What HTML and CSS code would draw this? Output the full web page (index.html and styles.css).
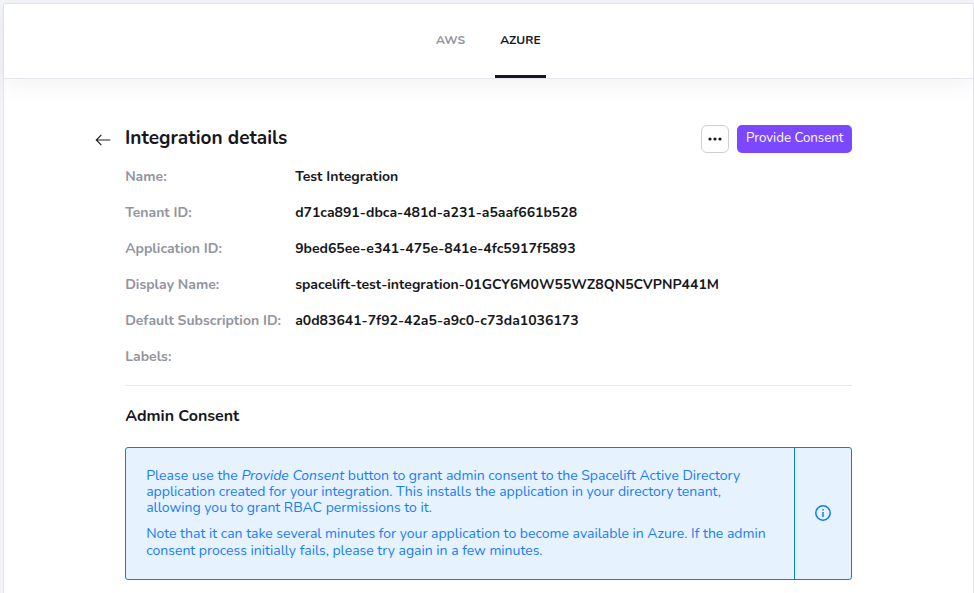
FILE: index.html
```html
<!DOCTYPE html>
<html lang="en">
<head>
<meta charset="utf-8">
<title>Integration details</title>
<link rel="stylesheet" href="styles.css">
</head>
<body>
<div class="panel">
  <nav class="tabs">
    <a class="tab">AWS</a>
    <a class="tab tab-active">AZURE</a>
  </nav>
  <main class="content">
    <header class="head">
      <svg class="back" width="16" height="12" viewBox="0 0 16 12"><path d="M6.300 .8 1.300 6l5 5.200M1.300 6h14" fill="none" stroke="#222226" stroke-width="1.200"/></svg>
      <h1 class="title">Integration details</h1>
      <button class="more" aria-label="More"><svg width="14" height="4" viewBox="0 0 14 4" fill="#17171c"><circle cx="2" cy="2" r="1.600"/><circle cx="7" cy="2" r="1.600"/><circle cx="12" cy="2" r="1.600"/></svg></button>
      <button class="primary">Provide Consent</button>
    </header>
    <dl class="details">
      <dt>Name:</dt><dd>Test Integration</dd>
      <dt>Tenant ID:</dt><dd>d71ca891-dbca-481d-a231-a5aaf661b528</dd>
      <dt>Application ID:</dt><dd>9bed65ee-e341-475e-841e-4fc5917f5893</dd>
      <dt>Display Name:</dt><dd>spacelift-test-integration-01GCY6M0W55WZ8QN5CVPNP441M</dd>
      <dt>Default Subscription ID:</dt><dd>a0d83641-7f92-42a5-a9c0-c73da1036173</dd>
      <dt>Labels:</dt><dd></dd>
    </dl>
    <h2 class="subtitle">Admin Consent</h2>
    <section class="notice">
      <div class="notice-text">
        <p>Please use the <em>Provide Consent</em> button to grant admin consent to the Spacelift Active Directory<br>application created for your integration. This installs the application in your directory tenant,<br>allowing you to grant RBAC permissions to it.</p>
        <p class="note">Note that it can take several minutes for your application to become available in Azure. If the admin<br>consent process initially fails, please try again in a few minutes.</p>
      </div>
      <div class="notice-icon"><svg width="16" height="16" viewBox="0 0 16 16"><circle cx="8" cy="8" r="7.200" fill="none" stroke="#0d7af5" stroke-width="1.500"/><path d="M8 7v5M8 4v1.600" stroke="#0d7af5" stroke-width="1.500"/></svg></div>
    </section>
  </main>
</div>
</body>
</html>
```
FILE: styles.css
```css
* { box-sizing: border-box; margin: 0; padding: 0; }
body {
  height: 593px;
  overflow: hidden;
  padding: 3px 0 0 3px;
  background: #f3f4f8;
  color: #17171c;
  font-family: Nunito, Lato, "Open Sans", sans-serif;
}
.panel {
  height: 590px;
  border: 1px solid #e6e7ed;
  border-bottom: 0;
  border-radius: 2px 2px 0 0;
  background: #fff;
}
.tabs {
  display: flex;
  height: 75px;
  padding-left: 426px;
  gap: 19px;
  border-bottom: 1px solid #e6e7ed;
  box-shadow: 0 6px 24px rgba(40, 40, 80, .06);
}
.tab {
  width: 46px;
  padding: 0 5.500px 0 6px;
  line-height: 73px;
  font-size: 12px;
  font-weight: 700;
  color: #92949f;
  white-space: nowrap;
}
.tab-active {
  width: 51px;
  padding-left: 5.300px;
  border-bottom: 3px solid #17171c;
  color: #17171c;
}
.content { width: 848px; padding: 46px 0 0 91px; }
.head { display: flex; height: 28px; }
.back { margin: 9px 14px 0 0; }
.title { flex: 1; font-size: 19px; font-weight: 700; line-height: 27px; }
.more {
  width: 28px;
  height: 28px;
  margin-right: 8px;
  display: flex;
  align-items: center;
  justify-content: center;
  border: 1px solid #cdced6;
  border-radius: 6px;
  background: #fff;
}
.primary {
  width: 115px;
  height: 28px;
  padding: 0 0 3px .500px;
  border: 0;
  border-radius: 5px;
  background: #7b47ff;
  color: #fff;
  font: 400 13.300px Nunito, Lato, sans-serif;
}
.details {
  display: grid;
  grid-template-columns: 170px 1fr;
  grid-auto-rows: 36px;
  margin: 6px 0 0 30px;
  padding-bottom: 10px;
  border-bottom: 1px solid #e9e9ec;
  font-size: 14px;
  font-weight: 700;
  line-height: 36px;
  white-space: nowrap;
}
.details dt, .details dd { padding-left: .150px; }
.details dt { color: #92949f; }
.subtitle { margin: 20px 0 0 30px; padding-left: .150px; font-size: 16px; line-height: 20px; }
.notice {
  display: flex;
  height: 133px;
  margin: 21px 0 0 30px;
  border: 1px solid #0d7af5;
  border-radius: 3px;
  background: #e6f2fe;
  color: #1a7cf8;
}
.notice-text { flex: 1; padding: 20px 0 0 20.150px; font-size: 14px; line-height: 16px; white-space: nowrap; }
.note { margin-top: 9px; line-height: 17px; }
.notice-icon { width: 57px; padding-bottom: 1px; display: flex; align-items: center; justify-content: center; border-left: 1px solid #0d7af5; }
```
